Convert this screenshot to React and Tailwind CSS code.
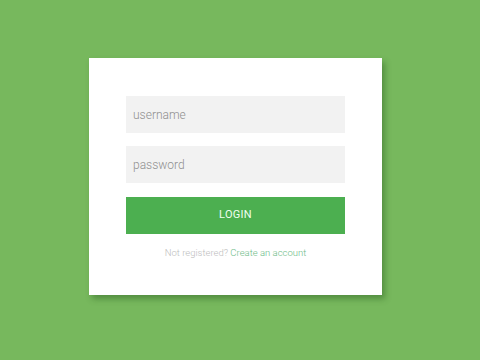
export default function App() {
  return (
    <div className="w-[480px] h-[360px] bg-[#77b85d] pt-[58px] pl-[89px] font-['Roboto',sans-serif]">
      <div className="w-[293px] h-[237px] bg-white px-[37px] pt-[38px] shadow-[3px_4px_6px_rgba(40,90,30,0.45)]">
        <div className="flex flex-col">
          <input
            placeholder="username"
            className="h-[37px] w-full bg-[#f2f2f2] px-[7px] text-[12px] font-light text-[#666] placeholder:text-[#8f8f8f] outline-none"
          />
          <input
            type="password"
            placeholder="password"
            className="mt-[13px] h-[37px] w-full bg-[#f2f2f2] px-[7px] text-[12px] font-light text-[#666] placeholder:text-[#8f8f8f] outline-none"
          />
          <button className="mt-[14px] h-[37px] w-full bg-[#4caf50] text-[11px] uppercase tracking-[0.3px] text-[#f0fff0]">
            Login
          </button>
          <p className="mt-[12px] text-center text-[9.5px] font-light text-[#bdbdbd]">
            Not registered? <span className="text-[#6dbb86]">Create an account</span>
          </p>
        </div>
      </div>
    </div>
  );
}
